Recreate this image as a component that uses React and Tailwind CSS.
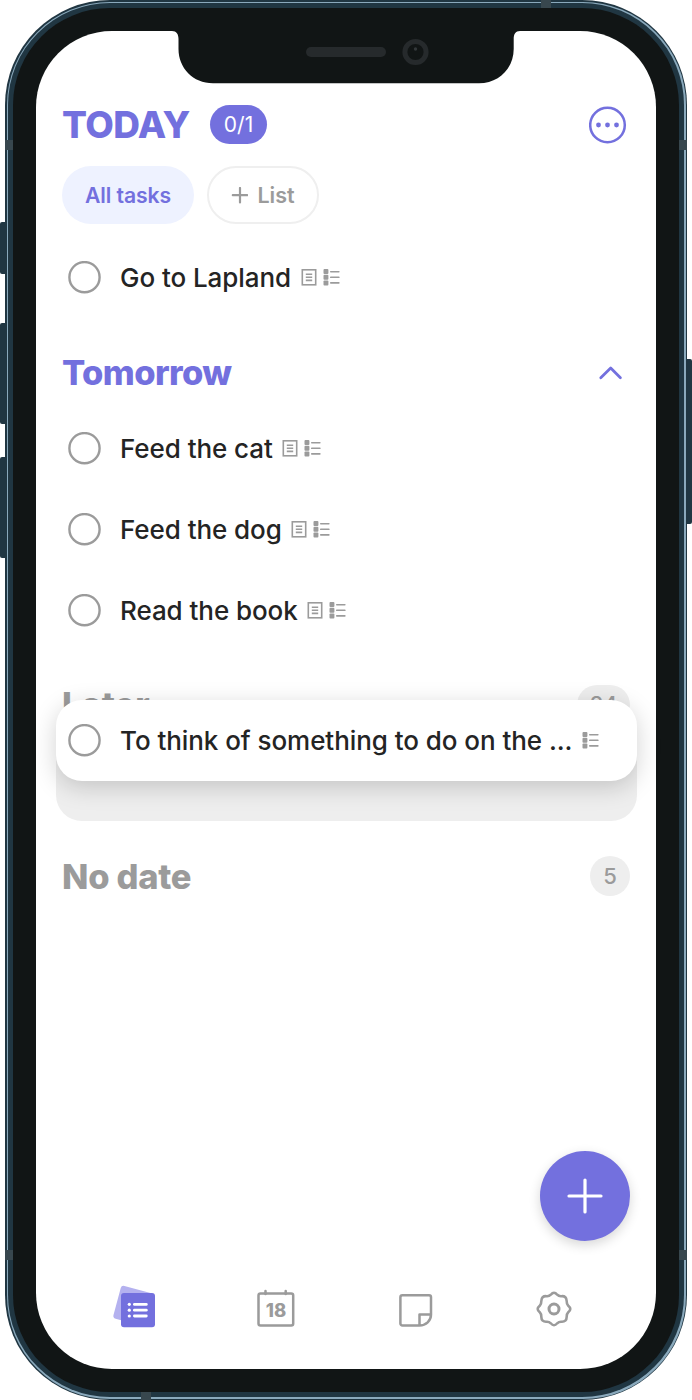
import React from "react";

function NoteIcon() {
  return (
    <svg width="16" height="17" viewBox="0 0 16 17" fill="none" stroke="#9b9b9b" strokeWidth="1.6">
      <rect x="1.3" y="0.8" width="13.4" height="15" />
      <path d="M4.8 5.200h6.400M4.800 8.300h6.400M4.800 11.400h6.400" />
    </svg>
  );
}

function SubtasksIcon() {
  return (
    <svg width="17" height="17" viewBox="0 0 17 17" fill="#9b9b9b">
      <rect x="0.5" y="0.1" width="4.9" height="4.900" rx="0.9" />
      <rect x="0.5" y="5.800" width="4.9" height="4.900" rx="0.9" />
      <rect x="0.5" y="11.500" width="4.9" height="4.900" rx="0.9" />
      <rect x="7" y="1.900" width="9.600" height="1.600" rx="0.7" />
      <rect x="7" y="7.500" width="9.600" height="1.600" rx="0.7" />
      <rect x="7" y="13.100" width="9.600" height="1.600" rx="0.7" />
    </svg>
  );
}

function Task({ title, note = true }) {
  return (
    <div className="flex h-[81px] shrink-0 items-center">
      <svg className="ml-[6px] shrink-0" width="33" height="33" viewBox="0 0 33 33">
        <circle cx="16.500" cy="16.200" r="15.100" fill="none" stroke="#9b9b9b" strokeWidth="2.400" />
      </svg>
      <span className="ml-[19px] whitespace-nowrap pt-px text-[26px] font-[450] leading-8 tracking-[-0.060px] text-[#242424]">
        {title}
      </span>
      <span className="ml-[9.500px] flex items-center gap-[6px]">
        {note && <NoteIcon />}
        <SubtasksIcon />
      </span>
    </div>
  );
}

function SideButton({ className }) {
  return <div className={`absolute bg-[#203642] ${className}`} />;
}

function AntennaBand({ className }) {
  return <div className={`absolute bg-[#38474e] ${className}`} />;
}

function Notch() {
  return (
    <svg className="absolute left-[136px] top-0" width="348" height="53" viewBox="0 0 348 53">
      <path
        d="M0 0H348C343.500 0 341.700 3 341.700 8V18C341.700 37 327 52.300 307 52.300H41C21 52.300 6.500 37 6.500 18V8C6.500 3 4.500 0 0 0Z"
        fill="#111515"
      />
      <rect x="134" y="16" width="80" height="10" rx="5" fill="#262a2c" />
      <circle cx="243.500" cy="21" r="10.600" fill="none" stroke="#262a2c" strokeWidth="5" />
      <circle cx="243.500" cy="18" r="1.700" fill="#33383a" />
    </svg>
  );
}

function TabBar() {
  return (
    <nav className="flex h-[48px] items-center">
      <svg className="mb-[6px] ml-[50px]" width="44" height="44" viewBox="0 0 44 44">
        <rect x="5" y="4.500" width="33" height="34" rx="3" fill="#b4b1ef" transform="rotate(15 20 20)" />
        <rect x="9" y="9" width="34" height="34.300" rx="3" fill="#7370de" />
        <g fill="#fff">
          <circle cx="17.300" cy="20.300" r="1.600" />
          <circle cx="17.300" cy="26.200" r="1.600" />
          <circle cx="17.300" cy="32" r="1.600" />
          <rect x="21" y="18.900" width="14.700" height="2.900" rx="1.400" />
          <rect x="21" y="24.700" width="14.700" height="2.900" rx="1.400" />
          <rect x="21" y="30.500" width="14.700" height="2.900" rx="1.400" />
        </g>
      </svg>
      <div className="relative mb-[2px] ml-[101px] flex h-[40px] w-[38px] items-end justify-center">
        <svg className="absolute left-0 top-0" width="38" height="40" viewBox="0 0 38 40" fill="none" stroke="#9b9b9b" strokeWidth="2.500" strokeLinecap="round">
          <rect x="1.500" y="5.500" width="34.700" height="32" rx="2" />
          <path d="M8.500 3v3M28.700 3v3" />
        </svg>
        <span className="relative mb-[8px] text-[18.500px] font-extrabold leading-5 text-[#9b9b9b]">18</span>
      </div>
      <svg className="ml-[104px] mt-[4px]" width="34" height="34" viewBox="0 0 34 34" fill="none" stroke="#9b9b9b" strokeWidth="2.500" strokeLinejoin="round">
        <path d="M20.500 31.500H3.400A2 2 0 0 1 1.400 29.500V3.300A2 2 0 0 1 3.400 1.300H30A2 2 0 0 1 32 3.300V20.500C32 27 27 31.500 20.500 31.500Z" />
        <path d="M20.500 31.500V20.500H32" />
      </svg>
      <svg className="ml-[103px]" width="36" height="36" viewBox="0 0 36 36" fill="none" stroke="#9b9b9b" strokeWidth="2.600" strokeLinejoin="round">
        <path d="M14.800 3.700Q18 -0.300 21.200 3.700Q23 5.500 25.500 5.200Q30.600 4.800 30.700 10.200Q30.500 12.800 32.300 14.800Q36.300 18 32.300 21.200Q30.500 23.200 30.700 25.700Q30.600 31 25.500 30.700Q23 30.500 21.200 32.300Q18 36.300 14.800 32.300Q13 30.500 10.500 30.700Q5.400 31 5.300 25.700Q5.500 23.200 3.700 21.200Q-0.300 18 3.700 14.800Q5.500 12.800 5.300 10.200Q5.400 4.800 10.500 5.200Q13 5.500 14.800 3.700Z" />
        <circle cx="18" cy="18" r="5" strokeWidth="3" />
      </svg>
    </nav>
  );
}

export default function App() {
  return (
    <div className="relative h-[1400px] w-[692px] overflow-hidden bg-white pl-[5px] font-['Inter',sans-serif]">
      <SideButton className="left-0 top-[222px] h-[52px] w-[6px] rounded-l-[2px]" />
      <SideButton className="left-0 top-[323px] h-[101px] w-[6px] rounded-l-[2px]" />
      <SideButton className="left-0 top-[457px] h-[101px] w-[6px] rounded-l-[2px]" />
      <SideButton className="left-[686px] top-[359px] h-[165px] w-[6px] rounded-r-[2px]" />

      <div className="relative h-[1400px] w-[682px] rounded-[105px] bg-[#203642] p-[1.5px]">
        <div className="h-full rounded-[103px] bg-[#8aa9bc] p-[1.5px]">
          <div className="h-full rounded-[102px] bg-[#203642] p-[5px]">
            <div className="h-full rounded-[97px] bg-[#111515] p-[23px]">
              <main className="relative flex h-full flex-col rounded-[76px] bg-white px-[26px]">
                <Notch />

                <header className="mt-[73px] flex h-[40px] shrink-0 items-center">
                  <h1 className="pt-[2px] text-[37px] font-extrabold leading-10 tracking-[-0.600px] text-[#7370de]">TODAY</h1>
                  <span className="absolute left-[174px] flex h-[39px] w-[57px] items-center justify-center rounded-full bg-[#7370de] pt-px text-[21px] text-white">
                    0/1
                  </span>
                  <svg className="ml-auto mr-[3px] mt-[2px]" width="38" height="38" viewBox="0 0 38 38">
                    <circle cx="18.500" cy="19" r="17.300" fill="none" stroke="#7370de" strokeWidth="2.500" />
                    <g fill="#7370de">
                      <circle cx="9.500" cy="19" r="2.400" />
                      <circle cx="18.500" cy="19" r="2.400" />
                      <circle cx="27.500" cy="19" r="2.400" />
                    </g>
                  </svg>
                </header>

                <div className="mt-[21.500px] flex h-[58px] shrink-0 gap-[13px]">
                  <button className="h-full w-[132px] rounded-[29px] bg-[#eef2ff] pt-[2px] text-[21.200px] font-semibold tracking-[-0.100px] text-[#7370de]">
                    All tasks
                  </button>
                  <button className="flex h-full w-[112px] items-center justify-center gap-[9px] rounded-[29px] border-[2.500px] border-[#efefef] pt-px text-[21.500px] font-semibold text-[#9b9b9b]">
                    <svg width="17" height="17" viewBox="0 0 17 17" stroke="#9b9b9b" strokeWidth="2.200" strokeLinecap="round">
                      <path d="M9 1v14.400M1.800 8.200h14.400" />
                    </svg>
                    <span className="pt-px">List</span>
                  </button>
                </div>

                <div className="mt-[13px] flex shrink-0 flex-col">
                  <Task title="Go to Lapland" />
                </div>

                <div className="flex h-[90px] shrink-0 items-center justify-between pt-[20px]">
                  <h2 className="text-[34.500px] font-extrabold leading-10 tracking-[-0.600px] text-[#7370de]">Tomorrow</h2>
                  <svg className="mr-[7px]" width="25" height="16" viewBox="0 0 25 16" fill="none" stroke="#7370de" strokeWidth="2.800" strokeLinecap="round" strokeLinejoin="round">
                    <path d="M2.800 12.800 12.700 3.100 22.400 12.800" />
                  </svg>
                </div>

                <div className="flex shrink-0 flex-col">
                  <Task title="Feed the cat" />
                  <Task title="Feed the dog" />
                  <Task title="Read the book" />
                </div>

                <div className="relative mt-[34px] shrink-0">
                  <div className="flex h-[40px] items-center justify-between">
                    <h2 className="pt-px text-[34.500px] font-extrabold leading-10 tracking-[-0.050px] text-[#9b9b9b]">Later</h2>
                    <span className="flex h-[40px] w-[53px] items-center justify-center rounded-full bg-[#eee] text-[22px] font-medium text-[#9b9b9b]">
                      24
                    </span>
                  </div>
                  <div className="mx-[-6.500px] h-[96.500px] rounded-[26px] bg-[#eee]" />
                  <div className="absolute left-[-6.500px] top-[15.500px] w-[581px] rounded-[26px] bg-white px-[6.500px] shadow-[0_6px_24px_rgba(0,0,0,0.18)]">
                    <Task title="To think of something to do on the ..." note={false} />
                  </div>
                </div>

                <div className="mt-[35px] flex h-[40px] shrink-0 items-center justify-between">
                  <h2 className="pt-px text-[34.500px] font-extrabold leading-10 tracking-[-0.280px] text-[#9b9b9b]">No date</h2>
                  <span className="flex size-[40px] items-center justify-center rounded-full bg-[#eee] text-[22px] font-medium text-[#9b9b9b]">
                    5
                  </span>
                </div>

                <div className="mb-[36px] mt-auto">
                  <TabBar />
                </div>

                <button className="absolute bottom-[128px] right-[26px] flex size-[90px] items-center justify-center rounded-full bg-[#7370de] shadow-[0_4px_12px_rgba(0,0,0,0.16)]">
                  <svg width="38" height="38" viewBox="0 0 38 38" stroke="#fff" strokeWidth="3.200" strokeLinecap="round">
                    <path d="M19 3v32M3 19h32" />
                  </svg>
                </button>
              </main>
            </div>
          </div>
        </div>
      </div>

      <AntennaBand className="left-[5px] top-[140px] h-[10px] w-[8px]" />
      <AntennaBand className="left-[679px] top-[140px] h-[10px] w-[8px]" />
      <AntennaBand className="left-[5px] top-[1250px] h-[10px] w-[8px]" />
      <AntennaBand className="left-[679px] top-[1250px] h-[10px] w-[8px]" />
      <AntennaBand className="left-[541px] top-0 h-[8px] w-[10px]" />
      <AntennaBand className="left-[141px] top-[1392px] h-[8px] w-[10px]" />
    </div>
  );
}
